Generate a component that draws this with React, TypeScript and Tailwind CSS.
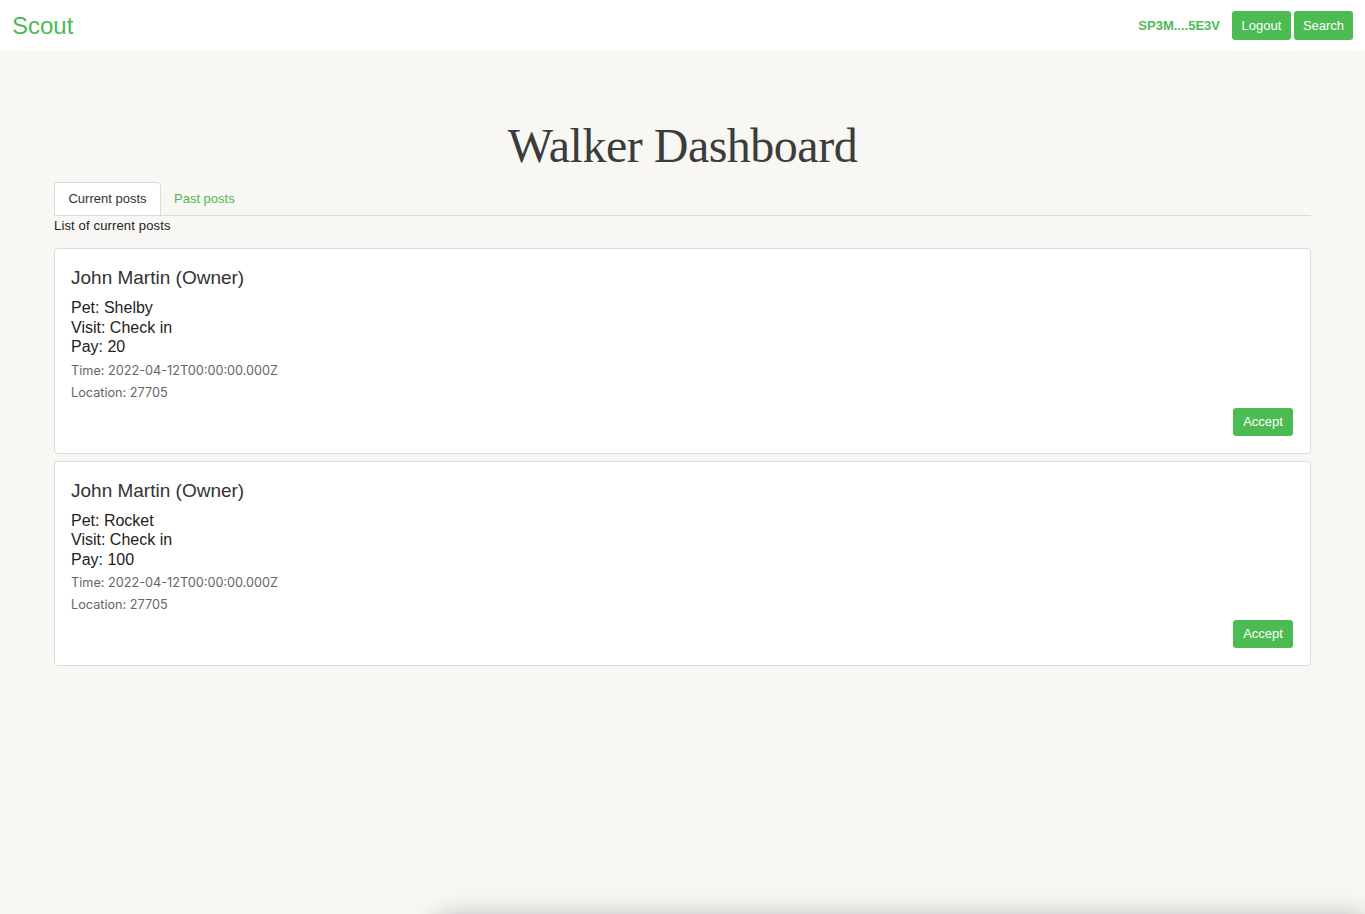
const posts = [
  { owner: "John Martin", pet: "Shelby", visit: "Check in", pay: 20, time: "2022-04-12T00:00:00.000Z", location: "27705" },
  { owner: "John Martin", pet: "Rocket", visit: "Check in", pay: 100, time: "2022-04-12T00:00:00.000Z", location: "27705" },
];

const sans = "font-['Liberation_Sans',Arial,sans-serif]";

const PostCard = ({ post }: { post: (typeof posts)[number] }) => (
  <div className="bg-white border border-[#dcdcdc] rounded-[4px] px-4 pt-[17px] pb-[17px] flex flex-col">
    <h5 className="text-[19px] leading-[24px] text-[#333] mb-[8px]">
      {post.owner} (Owner)
    </h5>
    <div className="text-[16px] leading-[19.5px] text-[#222]">Pet: {post.pet}</div>
    <div className="text-[16px] leading-[19.5px] text-[#222]">Visit: {post.visit}</div>
    <div className="text-[16px] leading-[19.5px] text-[#222]">Pay: {post.pay}</div>
    <div className="font-['Inter',sans-serif] text-[12.7px] leading-[16px] text-[#5f666d] mt-[6px]">
      Time: {post.time}
    </div>
    <div className="font-['Inter',sans-serif] text-[12.7px] leading-[16px] text-[#5f666d] mt-[6px]">
      Location: {post.location}
    </div>
    <div className="flex justify-end mt-[7px] pr-[1px]">
      <button className="bg-[#4cbb52] text-white text-[13px] rounded-[3px] h-[28px] w-[60px]">
        Accept
      </button>
    </div>
  </div>
);

export default function App() {
  return (
    <div className={`min-h-[914px] bg-[#f8f7f4] ${sans} relative overflow-hidden`}>
      <nav className="bg-white h-[51px] flex items-center justify-between pl-[12px] pr-[12px]">
        <span className="text-[24px] text-[#4cbb52] leading-none">Scout</span>
        <div className="flex items-center gap-[3px]">
          <span className="text-[13px] font-bold text-[#4cbb52] mr-[9px]">SP3M....5E3V</span>
          <button className="bg-[#4cbb52] text-white text-[13px] rounded-[3px] h-[29px] w-[59px]">Logout</button>
          <button className="bg-[#4cbb52] text-white text-[13px] rounded-[3px] h-[29px] w-[59px]">Search</button>
        </div>
      </nav>

      <div className="mx-[54px] pt-[66px]">
        <h1 className="text-center font-['Liberation_Serif',serif] text-[48px] tracking-[-0.5px] leading-[57px] text-[#3c3c3c] mb-[8px]">
          Walker Dashboard
        </h1>

        <div className="flex border-b border-[#dcdcdc] text-[13px]">
          <div className="bg-white border border-[#dcdcdc] border-b-0 rounded-t-[4px] w-[107px] h-[33px] flex items-center justify-center text-[#333] -mb-px">
            Current posts
          </div>
          <div className="pl-[13px] h-[33px] flex items-center text-[#4cbb52]">Past posts</div>
        </div>
        <p className="text-[13px] leading-[20px] tracking-[0.15px] text-[#222] mb-[12px]">List of current posts</p>

        <div className="flex flex-col gap-[7px]">
          {posts.map((p, i) => (
            <PostCard key={i} post={p} />
          ))}
        </div>
      </div>

      <div className="absolute left-[430px] right-0 top-[916px] h-[30px] shadow-[0_0_26px_rgba(0,0,0,0.26)] rounded-tl-[24px] bg-white" />
    </div>
  );
}
